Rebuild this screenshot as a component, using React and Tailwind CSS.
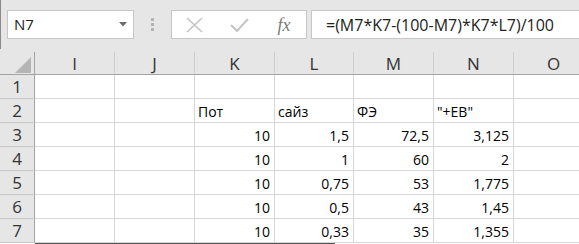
import React from 'react';

const cols = [
  { name: 'I', w: 'w-[80px]' },
  { name: 'J', w: 'w-[80px]' },
  { name: 'K', w: 'w-[80px]' },
  { name: 'L', w: 'w-[79px]' },
  { name: 'M', w: 'w-[80px]' },
  { name: 'N', w: 'w-[80px]' },
  { name: 'O', w: 'w-[80px]' },
];

// [K, L, M, N]; strings in row 2 are left aligned, numbers right aligned
const rows = [
  { n: 1, cells: ['', '', '', ''], left: false },
  { n: 2, cells: ['Пот', 'сайз', 'ФЭ', '"+EB"'], left: true },
  { n: 3, cells: ['10', '1,5', '72,5', '3,125'] },
  { n: 4, cells: ['10', '1', '60', '2'] },
  { n: 5, cells: ['10', '0,75', '53', '1,775'] },
  { n: 6, cells: ['10', '0,5', '43', '1,45'] },
  { n: 7, cells: ['10', '0,33', '35', '1,355'] },
];

function FormulaBar() {
  return (
    <div className="bg-[#e6e6e6]">
      <div className="h-[49px] border-l border-[#8a8a8a] flex items-start pt-[10px] pl-[6px]">
        {/* name box */}
        <div className="w-[127px] h-[29px] shrink-0 bg-white border border-[#c6c6c6] flex items-center justify-between pl-[6px] pr-[6px]">
          <span className="text-[15px] text-[#222] leading-none">N7</span>
          <svg width="8" height="5" viewBox="0 0 8 5">
            <path d="M0 0 L8 0 L4 4.5 Z" fill="#6b6b6b" />
          </svg>
        </div>

        {/* grip dots */}
        <div className="w-[37px] h-[29px] shrink-0 flex flex-col items-center justify-center gap-[2px] pr-[1px]">
          <div className="w-[3px] h-[3px] bg-[#b3b3b3]" />
          <div className="w-[3px] h-[3px] bg-[#b3b3b3]" />
          <div className="w-[3px] h-[3px] bg-[#b3b3b3]" />
        </div>

        {/* cancel / enter / fx */}
        <div className="w-[136px] h-[29px] shrink-0 bg-white border border-[#c6c6c6] flex items-center">
          <div className="w-[45px] flex justify-center">
            <svg width="17" height="16" viewBox="0 0 17 16">
              <path d="M1 1 L16 15 M16 1 L1 15" stroke="#c4c4c4" strokeWidth="1.6" fill="none" />
            </svg>
          </div>
          <div className="w-[45px] flex justify-center">
            <svg width="19" height="14" viewBox="0 0 19 14">
              <path d="M1 7 L7 13 L18 1" stroke="#c4c4c4" strokeWidth="2" fill="none" />
            </svg>
          </div>
          <div className="w-[44px] flex justify-center">
            <span className="font-['Liberation_Serif',serif] italic text-[18px] text-[#7a7a7a] leading-none">
              fx
            </span>
          </div>
        </div>

        {/* formula input */}
        <div className="ml-[4px] flex-1 h-[29px] bg-white border border-r-0 border-[#c6c6c6] flex items-center pl-[14px]">
          <span className="text-[16px] text-[#222] leading-none whitespace-nowrap">=(M7*K7-(100-M7)*K7*L7)/100</span>
        </div>
      </div>
      <div className="h-[3px]" />
    </div>
  );
}

function HeaderRow() {
  return (
    <div className="flex h-[23px] bg-[#e6e6e6] border-b border-[#a3a3a3]">
      <div className="w-[35px] shrink-0 border-r border-[#a3a3a3] flex items-end justify-end pr-[3px] pb-[1px]">
        <svg width="16" height="16" viewBox="0 0 16 16">
          <path d="M16 0 L16 16 L0 16 Z" fill="#b4b4b4" />
        </svg>
      </div>
      {cols.map((c) => (
        <div
          key={c.name}
          className={`${c.w} shrink-0 border-r border-[#cfcfcf] flex items-center justify-center text-[17px] text-[#333] leading-none`}
        >
          {c.name}
        </div>
      ))}
    </div>
  );
}

function DataRow({ row }) {
  return (
    <div className="flex h-[24px]">
      <div className="w-[35px] shrink-0 bg-[#e6e6e6] border-r border-b border-r-[#a3a3a3] border-b-[#c9c9c9] flex items-center justify-center text-[17px] text-[#333] leading-none">
        {row.n}
      </div>
      {cols.map((c, i) => {
        const val = i >= 2 && i <= 5 ? row.cells[i - 2] : '';
        return (
          <div
            key={c.name}
            className={`${c.w} shrink-0 border-r border-b border-[#d6d6d6] pt-[3px] text-[14px] leading-[20px] text-black whitespace-nowrap ${
              row.left ? 'text-left pl-[3px]' : 'text-right pr-[4px]'
            }`}
          >
            {val}
          </div>
        );
      })}
    </div>
  );
}

export default function App() {
  return (
    <div className="w-[579px] h-[244px] overflow-hidden bg-white font-['Open_Sans',sans-serif]">
      <FormulaBar />
      <HeaderRow />
      {rows.map((r) => (
        <DataRow key={r.n} row={r} />
      ))}
      <div className="flex h-[1px]">
        <div className="w-[35px]" />
        <div className="w-[300px] bg-[#555]" />
      </div>
    </div>
  );
}
